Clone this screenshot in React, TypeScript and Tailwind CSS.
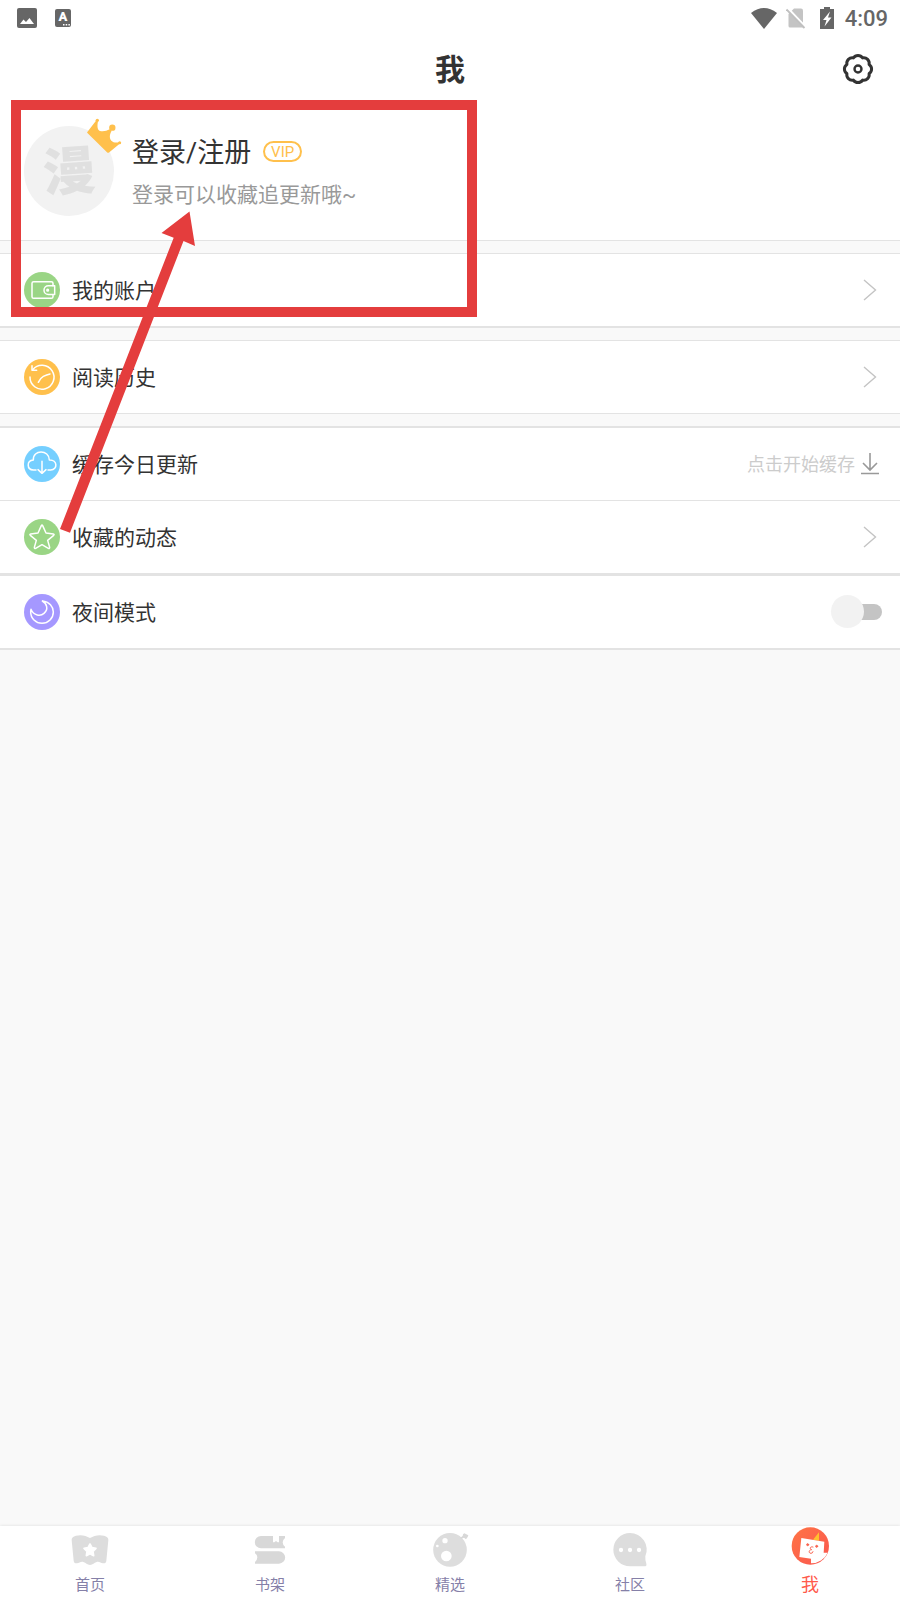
import React, { useState } from 'react';

const GearIcon = () => (
  <svg width="32" height="32" viewBox="-16 -16 32 32" fill="none" stroke="#333" strokeWidth="3" strokeLinejoin="round">
    <path d="M-4.6 -11.1A5.5 5.5 0 0 1 4.6 -11.1A5.5 5.5 0 0 1 11.1 -4.6A5.5 5.5 0 0 1 11.1 4.6A5.5 5.5 0 0 1 4.6 11.1A5.5 5.5 0 0 1 -4.6 11.1A5.5 5.5 0 0 1 -11.1 4.6A5.5 5.5 0 0 1 -11.1 -4.6A5.5 5.5 0 0 1 -4.6 -11.1Z" />
    <circle r="3.5" strokeWidth="2.4" />
  </svg>
);

const CrownIcon = () => (
  <svg width="36" height="36" viewBox="258 84 108 108" fill="#ffc04c" className="absolute -top-2 left-[62px]">
    <circle cx="292" cy="91" r="5" />
    <circle cx="337" cy="113" r="9.5" />
    <circle cx="359" cy="158" r="4.5" />
    <path d="M262 126L288 92L294 94C291 108 292 121 300 123C310 125 320 123 329 118L335 122C328 134 328 145 334 152C340 158 350 159 357 156L359 161L328 187Q324 190 321 187L263 130Q260 128 262 126Z" />
  </svg>
);

const icons = {
  wallet: (
    <>
      <path d="M87 41V34Q87 29 82 29H29Q24 29 24 34V74Q24 79 29 79H82Q87 79 87 74V68" />
      <path d="M92 41.500H73A13 13 0 0 0 73 67.500H92Z" />
      <circle cx="71" cy="54.500" r="2.500" fill="#fff" />
    </>
  ),
  history: (
    <>
      <path d="M18 54A36 36 0 1 0 26 32" />
      <path d="M24 20V34H38" />
      <path d="M43 70Q50 56 58 52Q68 47 78 45" />
    </>
  ),
  cloud: (
    <>
      <path d="M36 72H28C8 71 7 44 28 42C26 10 76 10 76 42C101 41 102 71 80 72H72" />
      <path d="M54 46V81M42 71L54 82L66 71" />
    </>
  ),
  star: <path d="M52 20Q54 16 56 20L66 42L88 45Q92 46 89 49L71 64L77 85Q77 90 73 88L54 77L35 88Q31 90 31 85L37 64L19 49Q16 46 20 45L42 42Z" />,
  moon: <path d="M55 21C76 23 88 38 88 54A34 34 0 0 1 20 54Q20 50 21 46C29 66 50 67 60 58C74 46 69 29 55 21Z" />,
};

const Chevron = () => (
  <svg width="14" height="22" viewBox="0 0 14 22" fill="none" stroke="#c4c4c4" strokeWidth="1.4" className="mr-[5px]">
    <path d="M1 1L12.500 11L1 21" />
  </svg>
);

interface RowProps {
  icon: keyof typeof icons;
  color: string;
  label: string;
  className: string;
  children: React.ReactNode;
}

const Row: React.FC<RowProps> = ({ icon, color, label, className, children }) => {
  const body = (
    <>
      <svg width="36" height="36" viewBox="0 0 108 108" fill="none" stroke="#fff" strokeWidth="4.500" strokeLinecap="round" strokeLinejoin="round">
        <circle cx="54" cy="54" r="54" fill={color} stroke="none" />
        {icons[icon]}
      </svg>
      <span className="flex-1 pt-0.5 text-left text-[21px] leading-7">{label}</span>
      {children}
    </>
  );
  const box = `box-content flex h-[72px] items-center gap-3 self-stretch bg-white pl-6 pr-[18px] border-[#e3e3e3] ${className}`;
  return icon === 'moon' ? <label className={box}>{body}</label> : <button type="button" className={box}>{body}</button>;
};

const tabs = [
  {
    label: '首页',
    viewBox: '213 57 114 114',
    icon: (
      <>
        <path fill="#ddd" d="M215 91C214 84 219 80 228 77C244 73 258 77 270 84C282 77 296 73 312 77C321 80 326 84 325 91L319 152Q318 161 309 160C302 159 298 154 290 156C282 158 279 165 270 165C261 165 258 158 250 156C242 154 238 159 231 160Q222 161 221 152Z" />
        <path fill="#fff" stroke="#fff" strokeWidth="5" strokeLinejoin="round" d="M270 102L276 113L288 115L279 124L281 137L270 131L259 137L261 124L252 115L264 113Z" />
      </>
    ),
  },
  {
    label: '书架',
    viewBox: '753 57 114 114',
    icon: (
      <>
        <path fill="#d8d8d8" d="M783 78H819V97H823L828 93L833 97H837V78H855V84Q848 90 848 97Q848 105 855 110V115H783A18 18 0 0 1 783 78Z" />
        <path fill="#d8d8d8" d="M765 124H837A18 18 0 0 1 837 161H765V156Q772 150 772 142Q772 135 765 130Z" />
      </>
    ),
  },
  {
    label: '精选',
    viewBox: '93 57 114 114',
    icon: (
      <>
        <circle cx="150" cy="119.500" r="50.500" fill="#ddd" />
        <path d="M181 83L187 79Q189 77 189 73L193 70L205 76L203 81L198 88L192 83L184 86Z" fill="#d8d8d8" />
        <circle cx="135" cy="92" r="8" fill="#fff" />
        <circle cx="112" cy="108" r="4" fill="#fff" />
        <circle cx="139" cy="138" r="16" fill="#fff" />
      </>
    ),
  },
  {
    label: '社区',
    viewBox: '633 57 114 114',
    icon: (
      <>
        <path fill="#ddd" d="M690 69A50 50 0 0 1 736 139Q735 149 739 161Q741 169 733 169H690A50 50 0 0 1 690 69Z" />
        <g fill="#fff">
          <circle cx="663" cy="120" r="6.500" />
          <circle cx="690" cy="120" r="6.500" />
          <circle cx="717" cy="120" r="6.500" />
        </g>
      </>
    ),
  },
  {
    label: '我',
    viewBox: '153 57 114 114',
    icon: (
      <>
        <defs>
          <linearGradient id="me" x1="0" y1="0" x2="1" y2="1">
            <stop offset="0" stopColor="#ff7444" />
            <stop offset="1" stopColor="#fa5650" />
          </linearGradient>
        </defs>
        <circle cx="211" cy="108" r="56" fill="url(#me)" />
        <path d="M219 89L237 67V92Z" fill="#ffc02e" />
        <path d="M184 84L253 95L251 128H263A53 53 0 0 1 213 160V146L178 141Z" fill="#fff" />
        <g fill="none" stroke="#fa6450" strokeWidth="3" strokeLinecap="round">
          <circle cx="203" cy="104" r="3" fill="#fa6450" />
          <circle cx="230" cy="109" r="3" fill="#fa6450" />
          <path d="M219 111C211 108 207 116 215 119C206 119 205 130 213 130Q218 130 219 125" />
        </g>
      </>
    ),
  },
];

const StatusBar = () => (
  <div className="flex h-9 items-center bg-white pl-[17px] pr-3 text-[#666]">
    <svg width="20" height="20" viewBox="0 0 20 20">
      <rect width="20" height="20" rx="2" fill="currentColor" />
      <path d="M3 16L6.500 11.500L9 14L12.500 10L17 16Z" fill="#fff" />
    </svg>
    <span className="relative ml-[18px] flex h-[18px] w-4 justify-center rounded-xs bg-[#666] text-[13px] leading-4 font-black text-white">
      A
      <svg width="8" height="2" viewBox="0 0 8 2" fill="#fff" className="absolute right-0 bottom-px">
        <path d="M0 0h1.500v1.500H0zM2.700 0h1.500v1.500H2.700zM5.400 0h1.500v1.500H5.400z" />
      </svg>
    </span>
    <svg width="26" height="21" viewBox="0 0 26 21" fill="currentColor" className="ml-auto">
      <path d="M0 5Q13 -5 26 5L13 21Z" />
    </svg>
    <svg width="20" height="21" viewBox="0 0 20 21" className="ml-[9px]">
      <path d="M8 0.500H15Q17 0.500 17 2.500V19.500H4Q2.500 19.500 2.500 18V6Z" fill="#c4c4c4" />
      <path d="M1 -0.500L20 19.500" stroke="#fff" strokeWidth="2.500" />
      <path d="M0.500 1.500L18.500 20" stroke="#c0c0c0" strokeWidth="1.800" />
    </svg>
    <svg width="14" height="22" viewBox="0 0 14 22" className="ml-[14px]">
      <path d="M4 0H10V2H14V22H0V2H4Z" fill="currentColor" />
      <path d="M10 4.500L3 13H6.500L4.500 19.500L11.500 10.500H8Z" fill="#fff" />
    </svg>
    <span className="ml-[11px] pt-0.5 text-[22px] leading-7 font-medium">4:09</span>
  </div>
);

export default function App() {
  const [night, setNight] = useState(false);

  return (
    <div className="relative flex min-h-screen flex-col overflow-x-hidden bg-[#f9f9f9] font-['Roboto','Noto_Sans_CJK_SC',sans-serif] text-[#333]">
      <StatusBar />

      <header className="grid h-[66px] grid-cols-[1fr_auto_1fr] items-center bg-white px-[26px]">
        <h1 className="col-start-2 pt-0.5 text-[30px] leading-9 font-bold">我</h1>
        <button type="button" aria-label="设置" className="justify-self-end">
          <GearIcon />
        </button>
      </header>

      <section className="flex items-center gap-[18px] bg-white p-6">
        <div className="relative flex size-[90px] items-center justify-center rounded-full bg-[#f2f2f2]">
          <span className="-rotate-4 pt-1 text-[52px] leading-none font-black text-[#e0e0e0]">漫</span>
          <CrownIcon />
        </div>
        <div className="flex flex-col gap-2.5 pt-0.5">
          <div className="flex items-start gap-3">
            <a href="#login" className="text-[27px] leading-9">登录/注册</a>
            <span className="mt-1.5 flex h-[21px] w-[39px] items-center justify-center rounded-full border-2 border-[#ffc04c] pt-0.5 text-[15px] leading-none text-[#ffc04c]">VIP</span>
          </div>
          <p className="text-[21px] leading-7 text-[#999]">登录可以收藏追更新哦~</p>
        </div>
      </section>

      <main className="flex flex-1 flex-col border-t border-[#e3e3e3] pt-3">
        <Row icon="wallet" color="#9ad585" label="我的账户" className="mb-3 border-t border-b-2">
          <Chevron />
        </Row>
        <Row icon="history" color="#ffc04c" label="阅读历史" className="mb-3 border-y">
          <Chevron />
        </Row>
        <Row icon="cloud" color="#75cfff" label="缓存今日更新" className="border-t-2 border-b">
          <span className="-mr-1.5 pt-0.5 text-lg leading-6 text-[#ccc]">点击开始缓存</span>
          <svg width="18" height="22" viewBox="0 0 18 22" fill="none" stroke="#999" strokeWidth="1.600" className="mr-[3px]">
            <path d="M9 0V17M2 10L9 17L16 10M0 20.500H18" />
          </svg>
        </Row>
        <Row icon="star" color="#9ad585" label="收藏的动态" className="border-b-3">
          <Chevron />
        </Row>
        <Row icon="moon" color="#a598ff" label="夜间模式" className="border-b-2">
          <input
            type="checkbox"
            checked={night}
            onChange={() => setNight(!night)}
            className="relative h-[34px] w-[51px] appearance-none before:absolute before:top-[9px] before:right-0 before:left-2 before:h-4 before:rounded-full before:bg-[#c4c4c4] after:absolute after:top-0 after:left-0 after:size-[33px] after:rounded-full after:bg-[#f2f2f2] checked:after:left-[18px]"
          />
        </Row>
      </main>

      <nav className="grid grid-cols-5 bg-white pt-[3px] pb-[5px] shadow-[0_0_3px_rgba(0,0,0,0.12)]">
        {tabs.map((tab) => (
          <a key={tab.label} href="#" className="flex flex-col items-center gap-2">
            <svg width="38" height="38" viewBox={tab.viewBox} className="overflow-visible">
              {tab.icon}
            </svg>
            <span className={tab.label === '我' ? 'text-lg leading-5 text-[#ff5a4c]' : 'text-[15px] leading-5 text-[#8580a8]'}>{tab.label}</span>
          </a>
        ))}
      </nav>

      {/* Login hint marker */}
      <div className="pointer-events-none absolute top-[100px] left-[11px] h-[217px] w-[466px] border-10 border-[#e43d3d]" />
      <svg width="140" height="324" viewBox="60 211 140 324" fill="#e43d3d" className="pointer-events-none absolute top-[211px] left-[60px]">
        <path d="M189.500 211.500L161.500 233L173.700 237.700L60 529L70 532.700L183.500 241L195 246Z" />
      </svg>
    </div>
  );
}
